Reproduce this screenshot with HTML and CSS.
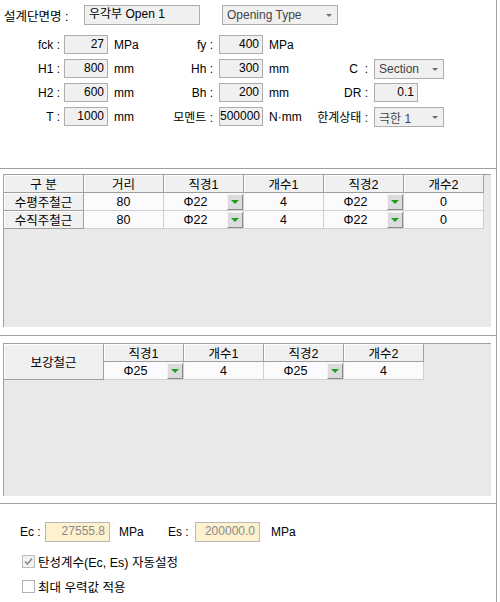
FILE: index.html
```html
<!DOCTYPE html>
<html lang="ko">

<head>
    <meta charset="UTF-8">
    <title>설계단면</title>
    <link rel="stylesheet" href="styles.css">
</head>

<body>
    <div class="panel panel-top">
        <div class="name-row">
            <div class="name-label">설계단면명 :</div>
            <div class="box name-box">우각부 Open 1</div>
            <div class="combo type-combo"><span>Opening Type</span><i class="arrow"></i></div>
        </div>

        <div class="param-grid">
            <div class="lbl">fck :</div>
            <div class="box num">27</div>
            <div class="unit">MPa</div>
            <div class="lbl">fy :</div>
            <div class="box num">400</div>
            <div class="unit">MPa</div>
            <div></div>
            <div></div>

            <div class="lbl">H1 :</div>
            <div class="box num">800</div>
            <div class="unit">mm</div>
            <div class="lbl">Hh :</div>
            <div class="box num">300</div>
            <div class="unit">mm</div>
            <div class="lbl">C&nbsp;&nbsp;:</div>
            <div class="combo"><span>Section</span><i class="arrow"></i></div>

            <div class="lbl">H2 :</div>
            <div class="box num">600</div>
            <div class="unit">mm</div>
            <div class="lbl">Bh :</div>
            <div class="box num">200</div>
            <div class="unit">mm</div>
            <div class="lbl">DR :</div>
            <div class="box num">0.1</div>

            <div class="lbl">T :</div>
            <div class="box num">1000</div>
            <div class="unit">mm</div>
            <div class="lbl">모멘트 :</div>
            <div class="box num">500000</div>
            <div class="unit">N·mm</div>
            <div class="lbl">한계상태 :</div>
            <div class="combo"><span>극한 1</span><i class="arrow"></i></div>
        </div>
    </div>

    <div class="panel panel-grid first-grid">
        <div class="grid-view">
            <div class="grid-table main-table">
                <div class="hd">구 분</div>
                <div class="hd">거리</div>
                <div class="hd">직경1</div>
                <div class="hd">개수1</div>
                <div class="hd">직경2</div>
                <div class="hd">개수2</div>

                <div class="hd">수평주철근</div>
                <div class="cell">80</div>
                <div class="cell drop"><span>Φ22</span><b class="drop-btn"></b></div>
                <div class="cell">4</div>
                <div class="cell drop"><span>Φ22</span><b class="drop-btn"></b></div>
                <div class="cell">0</div>

                <div class="hd">수직주철근</div>
                <div class="cell">80</div>
                <div class="cell drop"><span>Φ22</span><b class="drop-btn"></b></div>
                <div class="cell">4</div>
                <div class="cell drop"><span>Φ22</span><b class="drop-btn"></b></div>
                <div class="cell">0</div>
            </div>
        </div>
    </div>

    <div class="panel panel-grid second-grid">
        <div class="grid-view">
            <div class="grid-table extra-table">
                <div class="hd tall">보강철근</div>
                <div class="hd">직경1</div>
                <div class="hd">개수1</div>
                <div class="hd">직경2</div>
                <div class="hd">개수2</div>

                <div class="cell drop"><span>Φ25</span><b class="drop-btn"></b></div>
                <div class="cell">4</div>
                <div class="cell drop"><span>Φ25</span><b class="drop-btn"></b></div>
                <div class="cell">4</div>
            </div>
        </div>
    </div>

    <div class="panel panel-bottom">
        <div class="modulus-row">
            <div class="mod-label">Ec :</div>
            <div class="box mod-box">27555.8</div>
            <div class="mod-unit">MPa</div>
            <div class="mod-label es-label">Es :</div>
            <div class="box mod-box">200000.0</div>
            <div class="mod-unit">MPa</div>
        </div>

        <label class="check-row">
            <span class="check checked">
                <svg width="11" height="11" viewBox="0 0 11 11">
                    <path d="M2 5.5 L4.5 8 L9 2.5" fill="none" stroke="#8c8c8c" stroke-width="1.6" />
                </svg>
            </span>
            탄성계수(Ec, Es) 자동설정
        </label>
        <label class="check-row">
            <span class="check"></span>
            최대 우력값 적용
        </label>
    </div>
</body>

</html>
```

FILE: styles.css
```css
* {
    margin: 0;
    padding: 0;
    box-sizing: border-box;
}

body {
    font-family: "Liberation Sans", "Noto Sans CJK KR", sans-serif;
    font-size: 12px;
    color: #000;
    background: white;
    width: 500px;
    height: 602px;
    overflow: hidden;
}

.panel {
    width: 497px;
    border-right: 1px solid #a0a0a0;
    border-bottom: 1px solid #a0a0a0;
}

/* top parameters */
.panel-top {
    height: 169px;
    padding: 5px 0 0 4px;
}

.name-row {
    display: flex;
    align-items: center;
    height: 20px;
}

.name-label {
    width: 80px;
    font-size: 12.5px;
}

.box {
    height: 19px;
    line-height: 17px;
    border: 1px solid #adadad;
    background-color: #f0f0f0;
    white-space: nowrap;
    overflow: hidden;
}

.name-box {
    width: 116px;
    height: 20px;
    padding-left: 4px;
}

.combo {
    display: flex;
    align-items: center;
    width: 70px;
    height: 20px;
    border: 1px solid #adadad;
    background-color: #f0f0f0;
    color: #444;
    padding: 0 0 0 4px;
}

.combo span {
    flex: 1;
    white-space: nowrap;
}

.type-combo {
    width: 116px;
    margin-left: 22px;
}

.arrow {
    width: 0;
    height: 0;
    margin-right: 5px;
    border-left: 3px solid transparent;
    border-right: 3px solid transparent;
    border-top: 3px solid #707070;
}

.param-grid {
    display: grid;
    grid-template-columns: 56px 48px 52px 53px 50px 50px 55px 76px;
    grid-auto-rows: 19px;
    row-gap: 5px;
    margin-top: 10px;
}

.lbl {
    display: flex;
    justify-content: flex-end;
    align-items: center;
    white-space: nowrap;
}

.param-grid .box {
    width: 44px;
    justify-self: end;
}

.param-grid > :nth-child(8n) {
    justify-self: start;
    margin-left: 6px;
}

.param-grid .combo {
    height: 20px;
    width: 70px;
}

.num {
    text-align: right;
    padding-right: 3px;
}

.unit {
    display: flex;
    align-items: center;
    padding-left: 6px;
    white-space: nowrap;
}

/* grids */
.panel-grid {
    padding: 5px 5px 8px 3px;
}

.first-grid {
    height: 167px;
}

.second-grid {
    height: 168px;
    padding-top: 7px;
    padding-bottom: 7px;
}

.grid-view {
    height: 153px;
    background-color: #e9e9e9;
    border-top: 1px solid #a0a0a0;
    border-left: 1px solid #a0a0a0;
}

.grid-table {
    display: grid;
    grid-auto-rows: 18px;
    font-size: 12.5px;
}

.main-table {
    grid-template-columns: repeat(6, 80px);
}

.extra-table {
    grid-template-columns: 100px repeat(4, 80px);
}

.hd,
.cell {
    display: flex;
    align-items: center;
    justify-content: center;
    white-space: nowrap;
}

.hd {
    background-color: #f0f0f0;
    border-right: 1px solid #a0a0a0;
    border-bottom: 1px solid #a0a0a0;
    box-shadow: inset 1px 1px 0 #ffffff;
}

.hd.tall {
    grid-row: span 2;
}

.cell {
    background-color: #fbfbfe;
    border-right: 1px solid #d0d0d0;
    border-bottom: 1px solid #d0d0d0;
}

.cell.drop span {
    flex: 1;
    text-align: center;
}

.drop-btn {
    display: flex;
    align-items: center;
    justify-content: center;
    width: 16px;
    height: 16px;
    background-color: #dcdcdc;
    border: 1px solid;
    border-color: #f4f4f4 #8a8a8a #8a8a8a #f4f4f4;
}

.drop-btn::after {
    content: "";
    border-left: 4px solid transparent;
    border-right: 4px solid transparent;
    border-top: 4px solid #1e9e1e;
}

/* bottom */
.panel-bottom {
    height: 98px;
    border-bottom: none;
    padding: 18px 0 0 20px;
}

.modulus-row {
    display: flex;
    align-items: center;
    height: 20px;
}

.mod-label {
    width: 25px;
}

.es-label {
    width: 27px;
}

.mod-box {
    width: 65px;
    height: 20px;
    text-align: right;
    padding-right: 4px;
    color: #8a8a8a;
    background-color: #fdf1cf;
    border-color: #b8b8b8;
}

.mod-unit {
    width: 58px;
    padding-left: 9px;
}

.mod-unit:last-child {
    padding-left: 11px;
}

.check-row {
    display: flex;
    align-items: center;
    gap: 3px;
    height: 13px;
    margin-left: 2px;
    margin-top: 13px;
    font-size: 12.5px;
}

.check-row + .check-row {
    margin-top: 12px;
}

.check {
    display: flex;
    align-items: center;
    justify-content: center;
    width: 13px;
    height: 13px;
    border: 1px solid #b0b0b0;
    background-color: #ffffff;
}

.check.checked {
    background-color: #f2f2f2;
    border-color: #bcbcbc;
}
```
